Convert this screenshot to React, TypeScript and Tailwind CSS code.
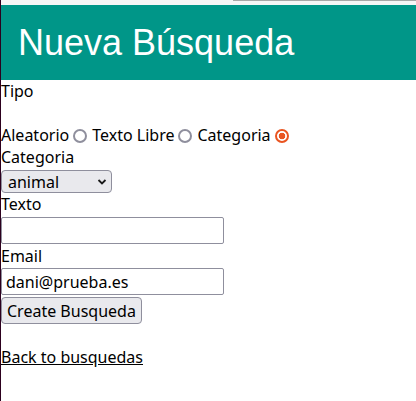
import React, { useState } from 'react';

type Tipo = 'aleatorio' | 'texto' | 'categoria';

const radioClass =
  "mt-[2px] mr-[5px] ml-[4px] h-[14px] w-[14px] shrink-0 appearance-none rounded-full border-[2px] border-[#8f8f9d] bg-white checked:border-[#e95420] checked:bg-[radial-gradient(circle,#e95420_0_3px,#ffffff_3.6px)]";

export default function App() {
  const [tipo, setTipo] = useState<Tipo>('categoria');
  const [categoria, setCategoria] = useState('animal');
  const [texto, setTexto] = useState('');
  const [email, setEmail] = useState('dani@prueba.es');

  return (
    <div className="flex min-h-[401px] w-[416px] bg-white font-['Noto_Sans',sans-serif] text-[16px] text-black">
      {/* desktop edge */}
      <div className="w-px shrink-0 bg-[#2c001e]" />

      <div className="flex min-w-0 flex-1 flex-col">
        {/* browser chrome strip */}
        <div className="flex h-[5px] bg-[#f6f6f6]">
          <div className="w-[232px]" />
          <div className="h-px flex-1 bg-[#a8a8a8]" />
        </div>

        <header className="flex h-[75px] items-center bg-[#009688] pl-[17px]">
          <h1 className="font-['Liberation_Sans',Arial,sans-serif] text-[36px] leading-[40px] font-normal text-white">
            Nueva Búsqueda
          </h1>
        </header>

        <form className="flex flex-col items-start leading-[22px]" onSubmit={(e) => e.preventDefault()}>
          <label className="h-[22px]">Tipo</label>

          <div className="mt-[22px] flex h-[22px] items-center">
            <label htmlFor="tipo_aleatorio">Aleatorio</label>
            <input
              id="tipo_aleatorio"
              type="radio"
              name="tipo"
              checked={tipo === 'aleatorio'}
              onChange={() => setTipo('aleatorio')}
              className={radioClass}
            />
            <label htmlFor="tipo_texto">Texto Libre</label>
            <input
              id="tipo_texto"
              type="radio"
              name="tipo"
              checked={tipo === 'texto'}
              onChange={() => setTipo('texto')}
              className={radioClass}
            />
            <label htmlFor="tipo_categoria">Categoria</label>
            <input
              id="tipo_categoria"
              type="radio"
              name="tipo"
              checked={tipo === 'categoria'}
              onChange={() => setTipo('categoria')}
              className={radioClass}
            />
          </div>

          <label htmlFor="categoria" className="h-[22px]">Categoria</label>
          <div className="relative mt-[2px]">
            <select
              id="categoria"
              value={categoria}
              onChange={(e) => setCategoria(e.target.value)}
              className="block h-[23px] w-[111px] appearance-none rounded-[4px] border border-[#8f8f9d] bg-[#e9e9ed] pl-[6px] leading-[20px] text-black"
            >
              <option value="animal">animal</option>
              <option value="planta">planta</option>
              <option value="lugar">lugar</option>
            </select>
            <svg
              className="pointer-events-none absolute top-[9px] left-[96px]"
              width="10"
              height="6"
              viewBox="0 0 10 6"
              fill="none"
            >
              <path d="M1.5 1l3.5 3.5L8.5 1" stroke="#1a1a1a" strokeWidth="1.8" />
            </svg>
          </div>

          <label htmlFor="texto" className="h-[22px]">Texto</label>
          <input
            id="texto"
            type="text"
            value={texto}
            onChange={(e) => setTexto(e.target.value)}
            className="mt-[2px] h-[27px] w-[223px] rounded-[2px] border border-[#8f8f9d] bg-white px-[4px] outline-none"
          />

          <label htmlFor="email" className="mt-[1px] h-[22px]">Email</label>
          <input
            id="email"
            type="text"
            value={email}
            onChange={(e) => setEmail(e.target.value)}
            className="mt-[1px] h-[27px] w-[223px] rounded-[2px] border border-[#8f8f9d] bg-white px-[4px] outline-none"
          />

          <button
            type="submit"
            className="mt-[2px] h-[27px] rounded-[4px] border border-[#8f8f9d] bg-[#e9e9ed] px-[5px] leading-[20px]"
          >
            Create Busqueda
          </button>

          <a href="#" className="mt-[22px] h-[22px] text-black underline">
            Back to busquedas
          </a>
        </form>
      </div>
    </div>
  );
}
